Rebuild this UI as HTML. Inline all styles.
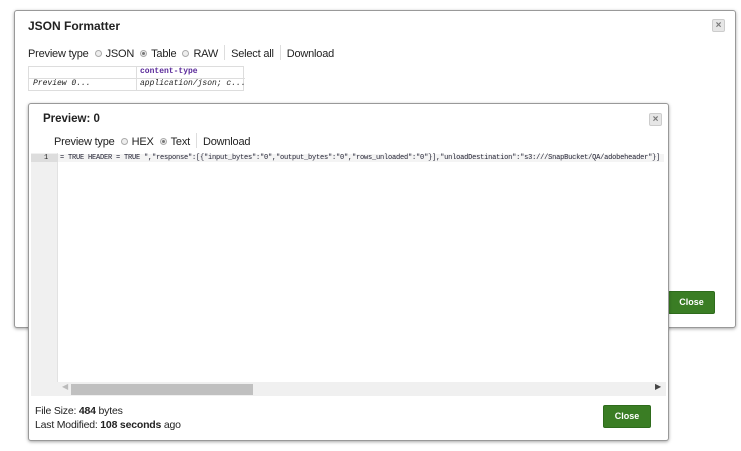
<!DOCTYPE html>
<html><head><style>
*{box-sizing:border-box;margin:0;padding:0}
body{width:741px;height:451px;background:#fff;position:relative;overflow:hidden;font-family:"Liberation Sans",sans-serif;color:#222}
.dlg{position:absolute;background:#fff;border:1px solid #999;border-radius:3px;box-shadow:0 1px 3px rgba(0,0,0,.35)}
.x{position:absolute;width:13px;height:13px;background:#e6e6e6;border:1px solid #ccc;border-radius:2px;font-size:10px;line-height:11px;text-align:center;color:#777;font-weight:bold}
.t{position:absolute;font-size:11px;white-space:nowrap}
.r{display:inline-block;width:7px;height:7px;border:1px solid #aaa;border-radius:50%;background:#eee;margin:0 4px 0 6px;vertical-align:0px;position:relative}
.r.on::after{content:"";position:absolute;left:1px;top:1px;width:3px;height:3px;border-radius:50%;background:#777}
.sep{display:inline-block;width:1px;height:15px;background:#ddd;vertical-align:-3px;margin:0 6px}
.btn{position:absolute;background:#3a7d24;color:#fff;font-size:9px;font-weight:bold;text-align:center;border:1px solid #2e6b1c;border-radius:2px}
.mono{font-family:"Liberation Mono",monospace}
</style></head><body>
<div class="dlg" style="left:14px;top:10px;width:722px;height:318px">
 <div class="t" style="left:13px;top:8px;font-weight:bold;font-size:12px">JSON Formatter</div>
 <div class="x" style="left:697px;top:8px">×</div>
 <div class="t" style="left:13px;top:34px;letter-spacing:-0.2px">Preview type<span class="r"></span>JSON<span class="r on"></span>Table<span class="r"></span>RAW<span class="sep"></span>Select all<span class="sep"></span>Download</div>
 <div style="position:absolute;left:13px;top:55px;width:216px;height:25px;border:1px solid #ddd">
  <div style="position:absolute;left:107px;top:0;width:1px;height:24px;background:#ddd"></div>
  <div style="position:absolute;left:0;top:11px;width:216px;height:1px;background:#ddd"></div>
  <div class="t mono" style="left:111px;top:0;font-size:8px;color:#5a2a9a;font-weight:bold">content-type</div>
  <div class="t mono" style="left:4px;top:12px;font-size:8px;font-style:italic">Preview 0...</div>
  <div class="t mono" style="left:111px;top:12px;font-size:8px;font-style:italic">application/json; c...</div>
 </div>
 <div class="btn" style="left:653px;top:280px;width:47px;height:23px;line-height:21px">Close</div>
</div>
<div class="dlg" style="left:28px;top:103px;width:641px;height:338px">
 <div class="t" style="left:14px;top:9px;font-weight:bold;font-size:11.5px">Preview: 0</div>
 <div class="x" style="left:620px;top:9px">×</div>
 <div class="t" style="left:25px;top:29px;letter-spacing:-0.2px">Preview type<span class="r"></span>HEX<span class="r on"></span>Text<span class="sep"></span>Download</div>
 <div style="position:absolute;left:2px;top:49px;width:635px;height:243px;background:#fff">
  <div style="position:absolute;left:0;top:0;width:27px;height:229px;background:#f0f0f0;border-right:1px solid #e2e2e2"></div>
  <div style="position:absolute;left:0;top:1px;width:27px;height:8px;background:#ddd"></div>
  <div style="position:absolute;left:27px;top:1px;width:606px;height:8px;background:#f4f4f4"></div>
  <div class="t mono" style="left:13px;top:0px;font-size:7px;line-height:10px">1</div>
  <div class="t mono" style="left:29px;top:0px;font-size:7px;line-height:10px;color:#223;letter-spacing:-0.2px">= TRUE  HEADER = TRUE ","response":[{"input_bytes":"0","output_bytes":"0","rows_unloaded":"0"}],"unloadDestination":"s3:///SnapBucket/QA/adobeheader"}]</div>
  <div style="position:absolute;left:0;top:229px;width:635px;height:14px;background:#f0f0f0"></div>
  <div style="position:absolute;left:40px;top:231px;width:182px;height:11px;background:#c0c0c0"></div>
  <div class="t" style="left:31px;top:229px;font-size:8px;color:#bbb">◀</div>
  <div class="t" style="left:624px;top:229px;font-size:8px;color:#444">▶</div>
 </div>
 <div class="t" style="left:6px;top:301px;font-size:10.5px;letter-spacing:-0.2px">File Size: <b>484</b> bytes</div>
 <div class="t" style="left:6px;top:315px;font-size:10.5px;letter-spacing:-0.2px">Last Modified: <b>108 seconds</b> ago</div>
 <div class="btn" style="left:574px;top:301px;width:48px;height:23px;line-height:21px">Close</div>
</div>
</body></html>
